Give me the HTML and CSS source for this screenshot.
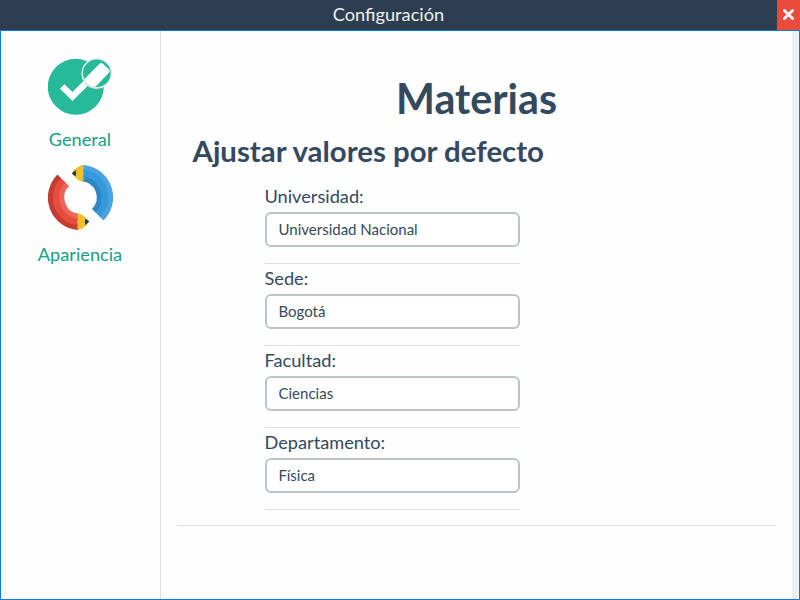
FILE: index.html
```html
<!DOCTYPE html>
<html lang="es">
<head>
<meta charset="utf-8">
<title>Configuración</title>
<link rel="stylesheet" href="styles.css">
</head>
<body>
<header class="titlebar">
  <span class="title">Configuración</span>
  <button class="close" aria-label="Cerrar">
    <svg width="12" height="12" viewBox="0 0 12 12"><path d="M2.200 2.200 9.800 9.800M9.800 2.200 2.200 9.800" stroke="#fff" stroke-width="2.600" stroke-linecap="round"/></svg>
  </button>
</header>
<div class="window">
  <nav class="sidebar">
    <a class="item">
      <svg class="icon icon-check" width="65" height="58" viewBox="0 0 65 58">
        <circle cx="27.800" cy="29.800" r="28" fill="#26b99a"/>
        <path d="M14.200 29.500 24.500 39.500 41 23" fill="none" stroke="#fff" stroke-width="6.500"/>
        <circle cx="48.800" cy="16.300" r="14.600" fill="#26b99a" stroke="#e4e8e8" stroke-width="1.600"/>
        <path d="M37 21.500 51.500 6.800Q53.300 5.200 55 6.800L61 12.400Q62.400 14 61 15.800L47.500 29.800Q39.500 30.500 36 24Z" fill="#fff"/>
        <path d="M34.600 20A14.600 14.600 0 0 0 50 30.900" fill="none" stroke="#e0e4e4" stroke-width="1.600"/>
      </svg>
      <span>General</span>
    </a>
    <a class="item">
      <svg class="icon" width="65" height="65" viewBox="0 0 65 65">
        <defs>
          <g id="tip">
            <path d="M30 48.500Q34 47.500 41 56.500Q37 64 30 65Q28.500 62 30 59.500Q28.300 57 30 54Q28.500 51 30 48.500Z" fill="#f0c02f"/>
            <path d="M37.500 53.500 41.200 56.500 37.500 60Q36.200 57 37.500 53.500Z" fill="#283746"/>
          </g>
          <g id="red" fill="none">
            <path d="M11.600 11.600A29.500 29.500 0 0 0 31 62" stroke="#c43d31" stroke-width="6"/>
            <path d="M19.100 19.100A19 19 0 0 0 31 51.500" stroke="#eb6658" stroke-width="5.500"/>
            <path d="M15.200 15.200A24.500 24.500 0 0 0 31 57" stroke="#e74c3c" stroke-width="6.500"/>
          </g>
        </defs>
        <use href="#red"/>
        <g fill="none">
          <path d="M53.400 53.400A29.500 29.500 0 0 0 34 3" stroke="#4aa3df" stroke-width="6"/>
          <path d="M45.900 45.900A19 19 0 0 0 34 13.500" stroke="#2e86c4" stroke-width="5.500"/>
          <path d="M49.800 49.800A24.500 24.500 0 0 0 34 8" stroke="#3498db" stroke-width="6.500"/>
        </g>
        <use href="#tip"/>
        <use href="#tip" transform="rotate(180 32.5 32.5)"/>
      </svg>
      <span>Apariencia</span>
    </a>
  </nav>
  <main class="content">
    <h1>Materias</h1>
    <h2>Ajustar valores por defecto</h2>
    <form class="fields">
      <div class="field"><label for="u">Universidad:</label><input id="u" type="text" value="Universidad Nacional"></div>
      <div class="field"><label for="s">Sede:</label><input id="s" type="text" value="Bogotá"></div>
      <div class="field"><label for="f">Facultad:</label><input id="f" type="text" value="Ciencias"></div>
      <div class="field"><label for="d">Departamento:</label><input id="d" type="text" value="Física"></div>
    </form>
    <hr class="end">
  </main>
  <div class="track"></div>
</div>
</body>
</html>
```
FILE: styles.css
```css
* { box-sizing: border-box; }
body {
  margin: 0;
  height: 600px;
  display: flex;
  flex-direction: column;
  overflow: hidden;
  background: #fefefe;
  color: #34495e;
  font: 18.2px/30px Lato, sans-serif;
}
.titlebar {
  display: grid;
  grid-template-columns: 1fr 23px;
  height: 30px;
  background: #2c3e50;
  color: #ecf0f1;
}
.title { line-height: 28px; text-align: center; }
.close {
  display: flex;
  align-items: center;
  justify-content: center;
  height: 30px;
  padding: 0 0 1px;
  border: 0;
  background: #e74c3c;
}
.close svg { width: 13px; height: 13px; }
.window {
  flex: 1;
  display: flex;
  border: 1px solid #0a78f0;
}
.sidebar {
  width: 160px;
  padding-top: 26px;
  border-right: 1px solid #ddd;
}
.item {
  display: flex;
  flex-direction: column;
  align-items: center;
  width: 158px;
  height: 108px;
}
.item { color: #16a085; }
.item span { margin-top: 9px; }
.icon { display: block; margin-left: 1px; }
.content { flex: 1; padding: 0 16px; }
h1, h2 { margin: 0; font-weight: 700; }
h1 {
  padding-top: 43px;
  font-size: 41.2px;
  line-height: 48px;
  text-align: center;
}
h2 {
  margin: 11px 0 0 15.500px;
  font-size: 29.400px;
  line-height: 36px;
}
.fields { width: 255px; margin: 13px 0 0 88px; }
.field {
  display: flex;
  flex-direction: column;
  height: 82px;
  border-bottom: 1px solid #ddd;
}
label { height: 30px; margin-left: -0.500px; line-height: 28px; }
input {
  height: 35px;
  padding: 0 11.500px 2px;
  border: 2px solid #bdc3c7;
  border-radius: 6px;
  background: #fff;
  color: #34495e;
  font: 15px Lato, sans-serif;
}
.end {
  height: 1px;
  margin: 15px 0 0;
  border: 0;
  background: #ddd;
}
.track { width: 7px; border-radius: 4px; background: #ecf0f1; }
```
